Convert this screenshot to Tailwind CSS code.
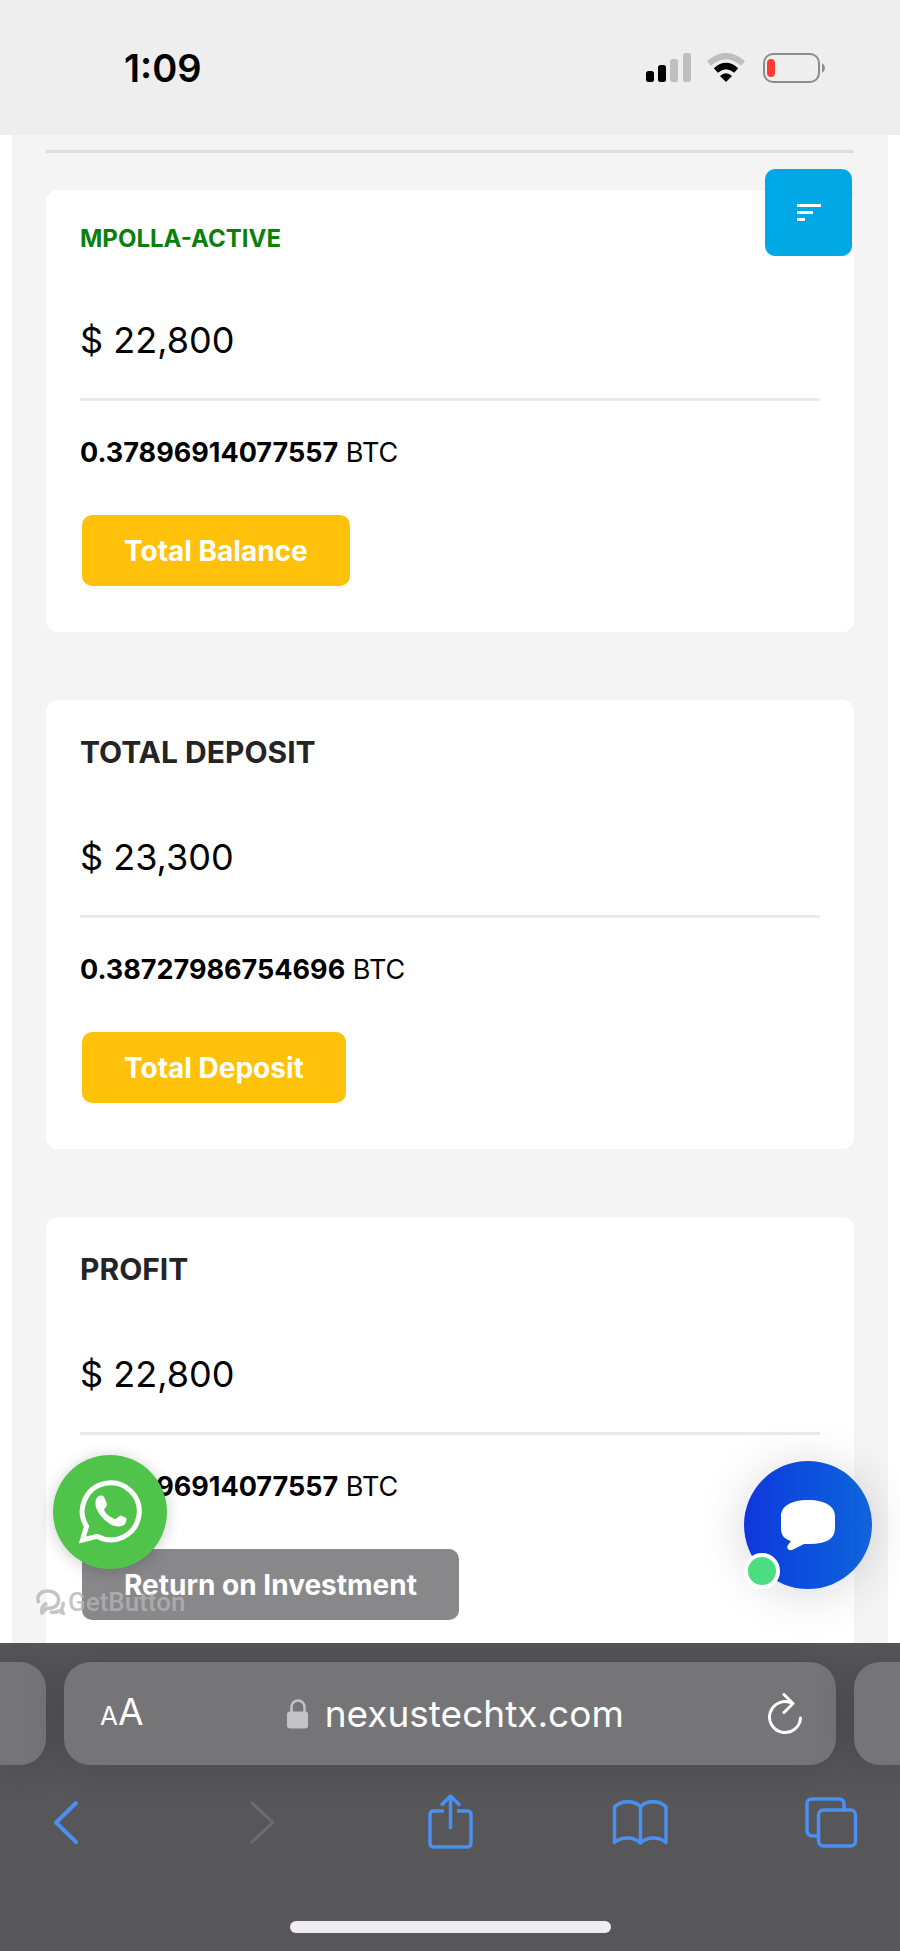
<!DOCTYPE html>
<html lang="en">
<head>
  <meta charset="UTF-8">
  <meta name="viewport" content="width=device-width, initial-scale=1.0">
  <title>Dashboard</title>
  <script src="https://cdn.jsdelivr.net/npm/@tailwindcss/browser@4"></script>
</head>
<body class="flex flex-col h-screen overflow-hidden bg-white text-black font-['Inter',sans-serif]">

  <!-- Status bar -->
  <header class="flex items-center justify-between h-[135px] shrink-0 bg-[#eeeeee] pl-[124px] pr-[73px]">
    <span class="text-[38px] leading-[48px] font-semibold">1:09</span>
    <div class="flex items-center">
      <svg class="w-[46px] h-[30px] mr-[15px]" viewBox="0 0 46 30">
        <rect x="0" y="18" width="8" height="11" rx="2.500"/>
        <rect x="12" y="12" width="8" height="17" rx="2.500"/>
        <rect x="24" y="6" width="8" height="23" rx="2.500" fill="#bfbfbf"/>
        <rect x="37" y="0" width="8" height="29" rx="2.500" fill="#bfbfbf"/>
      </svg>
      <svg class="w-[38px] h-[30px] mr-[18px]" viewBox="0 0 38 30">
        <path d="M2 10.500Q19 -4.500 36 10.500" fill="none" stroke="#bfbfbf" stroke-width="6"/>
        <path d="M8.800 17.500Q19 8.500 29.200 17.500" fill="none" stroke="#000" stroke-width="6"/>
        <path d="M13 23Q19 17.500 25 23L19 29Z"/>
      </svg>
      <svg class="w-[64px] h-[30px]" viewBox="0 0 64 30">
        <rect x="1" y="1" width="55" height="28" rx="9" fill="none" stroke="#8c8c8c" stroke-width="2"/>
        <rect x="4" y="6" width="8" height="18" rx="4" fill="#ff3b30"/>
        <path d="M59 10Q62 12 62 15Q62 18 59 20Z" fill="#8c8c8c"/>
      </svg>
    </div>
  </header>

  <main class="relative flex-1 min-h-0 overflow-hidden px-3">
    <div class="min-h-full bg-[#f5f4f5] px-[34px] pt-[15px]">
      <hr class="border-0 h-[3px] bg-[#dedede] mb-[37px]">

      <section class="bg-white rounded-xl px-[34px] pt-[34px] pb-[46px] mb-[68px]">
        <h2 class="text-[24px] leading-[29px] font-bold text-[#0a800a]">MPOLLA-ACTIVE</h2>
        <p class="mt-[63px] text-[36px] leading-[48px]">$ 22,800</p>
        <hr class="mt-[34px] border-0 h-[3px] bg-[#ebeaeb]">
        <p class="mt-8 text-[27px] leading-[40px]"><b>0.37896914077557</b> BTC</p>
        <button class="block mt-[42px] ml-[2px] h-[71px] px-[42px] rounded-[10px] bg-[#ffc10a] text-white text-[28px] font-bold">Total Balance</button>
      </section>

      <section class="bg-white rounded-xl px-[34px] pt-[34px] pb-[46px] mb-[68px]">
        <h2 class="text-[30px] leading-[36px] font-bold text-[#242424]">TOTAL DEPOSIT</h2>
        <p class="mt-[63px] text-[36px] leading-[48px]">$ 23,300</p>
        <hr class="mt-[34px] border-0 h-[3px] bg-[#ebeaeb]">
        <p class="mt-8 text-[27px] leading-[40px]"><b>0.38727986754696</b> BTC</p>
        <button class="block mt-[42px] ml-[2px] h-[71px] px-[42px] rounded-[10px] bg-[#ffc10a] text-white text-[28px] font-bold">Total Deposit</button>
      </section>

      <section class="bg-white rounded-xl px-[34px] pt-[34px] pb-[46px]">
        <h2 class="text-[30px] leading-[36px] font-bold text-[#242424]">PROFIT</h2>
        <p class="mt-[63px] text-[36px] leading-[48px]">$ 22,800</p>
        <hr class="mt-[34px] border-0 h-[3px] bg-[#ebeaeb]">
        <p class="mt-8 text-[27px] leading-[40px]"><b>0.37896914077557</b> BTC</p>
        <button class="block mt-[42px] ml-[2px] h-[71px] px-[42px] rounded-[10px] bg-[#88878a] text-white text-[28px] font-bold">Return on Investment</button>
      </section>
    </div>

    <!-- Menu toggle -->
    <button aria-label="Menu" class="absolute top-[34px] right-12 flex items-center justify-center size-[87px] rounded-[10px] bg-[#00a9e5]">
      <svg class="w-6 h-[18px]" viewBox="0 0 24 18" fill="#fff">
        <rect y="0" width="24" height="3"/>
        <rect y="7" width="16" height="3"/>
        <rect y="14" width="8" height="3"/>
      </svg>
    </button>

    <!-- WhatsApp widget -->
    <a href="#" aria-label="WhatsApp" class="absolute left-[53px] bottom-[74px] flex items-center justify-center size-[114px] rounded-full bg-[#4fc34a] shadow-[0_2px_16px_rgba(0,0,0,0.2)]">
      <svg class="size-16" viewBox="0 0 64 64">
        <path d="M4.500 60L8.500 46.300A28.500 28.500 0 1 1 19 56.300Z" fill="none" stroke="#fff" stroke-width="5"/>
        <path d="M20 16.500C22 15 25 15 26 17L29 24C29.500 26 26.500 28 26 30C28 34 32 37.500 37 39C39 39 41 35.500 43 35.500L48 38C49 39 48 43 46.500 44.500C43 47 39 47 35 45.500C27 42 20 34 18 27C17 23 17 19.500 20 16.500Z" fill="#fff"/>
      </svg>
    </a>
    <a href="#" class="absolute left-9 bottom-[26px] flex items-center gap-[3px] text-[#b5b5b5]/80">
      <svg class="w-[29px] h-[26px]" viewBox="0 0 29 26" fill="none" stroke="currentColor" stroke-width="3.500">
        <path d="M3 14C0 9 3 4 8 2.500C15 1 22 4 22.500 10C23 17 17 20 11 19L6 24C5 20 6 17 11 14"/>
        <path d="M14 22.500C17 24 20 23.500 22 22L27 24L25.500 20C27 18 27.500 15 26.500 13"/>
      </svg>
      <span class="text-[26px] leading-[30px] font-medium font-['Roboto',sans-serif]">GetButton</span>
    </a>

    <!-- Live chat -->
    <button aria-label="Open chat" class="absolute right-7 bottom-[54px] flex items-center justify-center size-32 rounded-full bg-linear-to-r from-[#1136dc] to-[#1164dd] shadow-[0_4px_48px_rgba(0,0,0,0.16)]">
      <svg class="w-14 h-[52px]" viewBox="0 0 56 52" fill="#fff">
        <path d="M28 1C46 1 55 8 55 17V29C55 40 46 45 30 45L24 45L12 51C8 52 6 48 8 46L11 42C4 40 1 36 1 29V17C1 8 10 1 28 1Z"/>
      </svg>
      <span class="absolute left-0 bottom-0 size-9 rounded-full border-4 border-white bg-[#4ade80]"></span>
    </button>
  </main>

  <!-- Browser toolbar -->
  <footer class="shrink-0 overflow-hidden bg-[#575658] pt-[19px] pb-[18px]">
    <div class="flex gap-[18px] h-[103px]">
      <div class="w-[46px] rounded-r-[26px] bg-[#757476] shadow-[0_0_40px_rgba(0,0,0,0.18)]"></div>
      <div class="flex flex-1 items-center pl-9 pr-[33px] rounded-[26px] bg-[#757476] text-white shadow-[0_0_40px_rgba(0,0,0,0.18)]">
        <button aria-label="Page settings" class="flex items-baseline leading-[48px]"><span class="text-[26px]">A</span><span class="text-[37px]">A</span></button>
        <div class="flex flex-1 items-center justify-center gap-4">
          <svg class="w-[22px] h-[30px]" viewBox="0 0 22 30">
            <path d="M4.500 14V8A6.500 6.500 0 0 1 17.500 8V14" fill="none" stroke="#c4c3c5" stroke-width="2.500"/>
            <rect x="0" y="12.500" width="21" height="17" rx="3" fill="#c4c3c5"/>
          </svg>
          <input type="text" aria-label="Address" value="nexustechtx.com" class="field-sizing-content text-[37px] leading-[48px]">
        </div>
        <button aria-label="Reload">
          <svg class="w-9 h-[44px]" viewBox="0 0 36 44" fill="none" stroke="#fff" stroke-width="3" stroke-linecap="round" stroke-linejoin="round">
            <path d="M33.500 26A15.500 15.500 0 1 1 25.500 11.500M17 2.500L26 11.500L17 20.500"/>
          </svg>
        </button>
      </div>
      <div class="w-[46px] rounded-l-[26px] bg-[#757476] shadow-[0_0_40px_rgba(0,0,0,0.18)]"></div>
    </div>

    <nav class="flex justify-between mt-[29px] pl-[38px] pr-[41px]">
      <button aria-label="Back">
        <svg class="size-14" viewBox="0 0 56 56" fill="none" stroke="#4a90f2" stroke-width="4" stroke-linecap="round" stroke-linejoin="round"><path d="M38 9L18 28.500L38 48"/></svg>
      </button>
      <button aria-label="Forward" disabled>
        <svg class="size-14" viewBox="0 0 56 56" fill="none" stroke="#6d6c6e" stroke-width="3" stroke-linecap="round" stroke-linejoin="round"><path d="M23 9L44 28.500L23 48"/></svg>
      </button>
      <button aria-label="Share">
        <svg class="size-14" viewBox="0 0 56 56" fill="none" stroke="#4a90f2" stroke-width="3.500" stroke-linejoin="round">
          <path d="M23 17H13Q9 17 9 21V49Q9 53 13 53H46Q50 53 50 49V21Q50 17 46 17H36"/>
          <path d="M29.500 35V3M20 11.500L29.500 2L39 11.500"/>
        </svg>
      </button>
      <button aria-label="Bookmarks">
        <svg class="size-14" viewBox="0 0 56 56" fill="none" stroke="#4a90f2" stroke-width="3.500" stroke-linejoin="round">
          <path d="M28.500 13C23 6 9 6 2.500 13V48.500C9 42.500 22 42 28.500 49C35 42 48 42.500 54 48.500V13C48 6 34 6 28.500 13V49"/>
        </svg>
      </button>
      <button aria-label="Tabs">
        <svg class="size-14" viewBox="0 0 56 56" fill="none" stroke="#4a90f2" stroke-width="3.500" stroke-linejoin="round">
          <path d="M14 42H10Q4 42 4 36V10Q4 5 9 5H36Q41 5 41 10V15"/>
          <rect x="15.500" y="16" width="37" height="36" rx="5"/>
        </svg>
      </button>
    </nav>

    <div class="mx-auto mt-[71px] w-[321px] h-3 rounded-full bg-[#efedf0]"></div>
  </footer>
</body>
</html>
